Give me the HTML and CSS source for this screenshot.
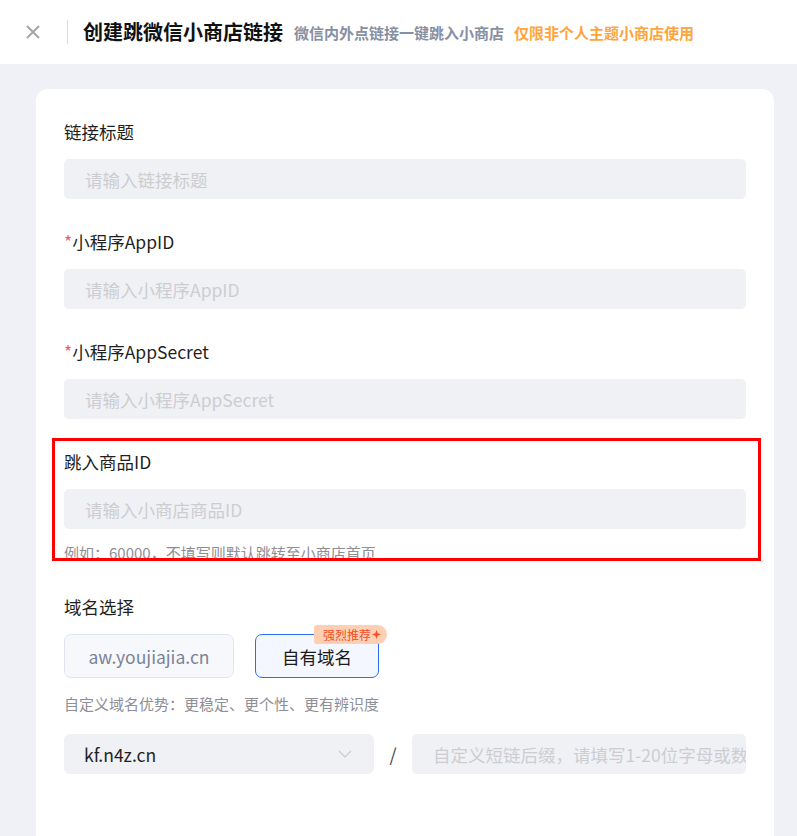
FILE: index.html
```html
<!DOCTYPE html>
<html lang="zh-CN">
<head>
<meta charset="utf-8">
<title>创建跳微信小商店链接</title>
<link rel="stylesheet" href="styles.css">
</head>
<body>
<header class="header">
  <span class="close">
    <svg width="16" height="16" viewBox="0 0 16 16"><path d="M2 2 L14 14 M14 2 L2 14" stroke="#a6a6a6" stroke-width="2" fill="none"/></svg>
  </span>
  <span class="divider"></span>
  <h1 class="title">创建跳微信小商店链接</h1>
  <span class="subtitle">微信内外点链接一键跳入小商店</span>
  <span class="warn">仅限非个人主题小商店使用</span>
</header>
<main class="page">
  <section class="card">
    <div class="item">
      <div class="label">链接标题</div>
      <div class="input placeholder">请输入链接标题</div>
    </div>
    <div class="item">
      <div class="label"><span class="req">*</span>小程序AppID</div>
      <div class="input placeholder">请输入小程序AppID</div>
    </div>
    <div class="item">
      <div class="label"><span class="req">*</span>小程序AppSecret</div>
      <div class="input placeholder">请输入小程序AppSecret</div>
    </div>
    <div class="item item-last">
      <div class="label">跳入商品ID</div>
      <div class="input placeholder">请输入小商店商品ID</div>
      <div class="hint hint-id">例如：60000，不填写则默认跳转至小商店首页</div>
    </div>
    <div class="item-domain">
      <div class="label">域名选择</div>
      <div class="domain-row">
        <div class="opt opt-default">aw.youjiajia.cn</div>
        <div class="opt opt-own">自有域名
          <span class="badge">强烈推荐<svg width="9" height="9" viewBox="0 0 10 10"><path d="M5 0 L6.3 3.7 L10 5 L6.3 6.3 L5 10 L3.7 6.3 L0 5 L3.7 3.7 Z" fill="#f0502a"/></svg></span>
        </div>
      </div>
      <div class="hint hint-domain">自定义域名优势：更稳定、更个性、更有辨识度</div>
      <div class="link-row">
        <div class="select">
          <span>kf.n4z.cn</span>
          <svg width="14" height="8" viewBox="0 0 14 8"><path d="M1 1 L7 7 L13 1" stroke="#c8cad0" stroke-width="1.2" fill="none"/></svg>
        </div>
        <span class="slash">/</span>
        <div class="input placeholder suffix">自定义短链后缀，请填写1-20位字母或数字</div>
      </div>
    </div>
  </section>
</main>
<div class="mark"></div>
</body>
</html>
```

FILE: styles.css
```css
* { box-sizing: border-box; margin: 0; padding: 0; }
html, body { height: 100%; }
body {
  font-family: "Noto Sans CJK SC", "Noto Sans", sans-serif;
  background: #f0f1f6;
  color: #222;
  overflow: hidden;
  position: relative;
}
.header {
  height: 64px;
  background: #fff;
  display: flex;
  align-items: center;
  padding-left: 25px;
}
.close { width: 16px; height: 16px; display: flex; }
.divider {
  width: 1px;
  height: 24px;
  background: #dcdcdc;
  margin: 0 15px 0 26px;
}
.title {
  font-size: 20px;
  font-weight: 700;
  color: #111;
  line-height: 28px;
}
.subtitle {
  font-size: 15px;
  font-weight: 700;
  color: #8790a3;
  margin-left: 11px;
}
.warn {
  font-size: 15px;
  font-weight: 700;
  color: #ffa43c;
  margin-left: 10px;
}
.page {
  padding: 25px 23px 0 36px;
}
.card {
  background: #fff;
  border-radius: 12px;
  padding: 31px 28px 80px 28px;
  min-height: 800px;
}
.item { margin-bottom: 31px; }
.item-last { margin-bottom: 32px; }
.label {
  font-size: 17.5px;
  line-height: 24px;
  margin-bottom: 15px;
  color: #1f1f1f;
}
.req { color: #f5576c; }
.input {
  height: 40px;
  background: #f0f1f5;
  border-radius: 5px;
  padding-left: 21px;
  display: flex;
  align-items: center;
  font-size: 17.5px;
  white-space: nowrap;
  overflow: hidden;
}
.placeholder { color: #cdcdd1; }
.hint {
  font-size: 15px;
  line-height: 20px;
  color: #8e8e96;
}
.hint-id { margin-top: 14px; }
.domain-row {
  display: flex;
  gap: 21px;
  margin-bottom: 16px;
}
.opt {
  height: 44px;
  border-radius: 7px;
  display: flex;
  align-items: center;
  justify-content: center;
  font-size: 17.5px;
  position: relative;
}
.opt-default {
  width: 170px;
  background: #f6f8fc;
  border: 1px solid #e1e5ef;
  color: #7b8396;
}
.opt-own {
  width: 124px;
  background: #f4f7ff;
  border: 1px solid #2b6cf6;
  color: #1a1a1a;
}
.badge {
  position: absolute;
  top: -10px;
  left: 58px;
  height: 19px;
  padding: 0 6px 0 9px;
  background: #ffcfb4;
  color: #f0502a;
  font-size: 12px;
  line-height: 19px;
  border-radius: 3px 10px 10px 3px;
  display: flex;
  align-items: center;
  white-space: nowrap;
}
.badge svg { margin-left: 1px; }
.hint-domain { margin-bottom: 20px; }
.link-row {
  display: flex;
  align-items: center;
}
.select {
  width: 310px;
  height: 40px;
  background: #f0f1f5;
  border-radius: 6px;
  display: flex;
  align-items: center;
  justify-content: space-between;
  padding: 0 22px 0 20px;
  font-size: 17.5px;
  color: #1f1f1f;
}
.slash {
  width: 38px;
  text-align: center;
  font-size: 18px;
  color: #444;
}
.suffix { flex: 1; padding-left: 21px; }
.mark {
  position: absolute;
  left: 52px;
  top: 438px;
  width: 709px;
  height: 123px;
  border: 3px solid #f00;
  pointer-events: none;
}
```
